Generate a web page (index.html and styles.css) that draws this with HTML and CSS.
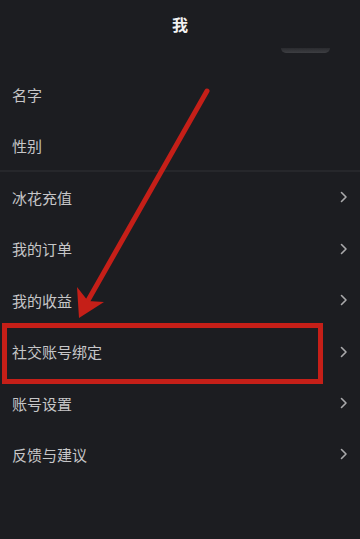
FILE: index.html
```html
<!DOCTYPE html>
<html lang="zh-CN">
<head>
<meta charset="utf-8">
<link rel="stylesheet" href="styles.css">
</head>
<body>
<div class="page">
  <header class="topbar">
    <h1 class="title">我</h1>
    <div class="ghost"></div>
  </header>
  <ul class="list">
    <li class="row"><span class="label">名字</span></li>
    <li class="row row--sep"><span class="label">性别</span></li>
    <li class="row"><span class="label">冰花充值</span><svg class="chev" viewBox="0 0 8 12"><path d="M1.5 1.5 L6 6 L1.5 10.5"/></svg></li>
    <li class="row"><span class="label">我的订单</span><svg class="chev" viewBox="0 0 8 12"><path d="M1.5 1.5 L6 6 L1.5 10.5"/></svg></li>
    <li class="row"><span class="label">我的收益</span><svg class="chev" viewBox="0 0 8 12"><path d="M1.5 1.5 L6 6 L1.5 10.5"/></svg></li>
    <li class="row"><span class="label">社交账号绑定</span><svg class="chev" viewBox="0 0 8 12"><path d="M1.5 1.5 L6 6 L1.5 10.5"/></svg></li>
    <li class="row"><span class="label">账号设置</span><svg class="chev" viewBox="0 0 8 12"><path d="M1.5 1.5 L6 6 L1.5 10.5"/></svg></li>
    <li class="row"><span class="label">反馈与建议</span><svg class="chev" viewBox="0 0 8 12"><path d="M1.5 1.5 L6 6 L1.5 10.5"/></svg></li>
  </ul>
  <svg class="annot" viewBox="0 0 360 539" width="360" height="539">
    <line x1="207" y1="91" x2="86" y2="304" class="arrow-line"/>
    <path class="arrow-head" d="M77 287 L79 318 L104 302 L88 301 Z"/>
    <rect class="hl-box" x="4.5" y="325.5" width="316" height="56"/>
  </svg>
</div>
</body>
</html>
```
FILE: styles.css
```css
* { box-sizing: border-box; }
html, body { margin: 0; padding: 0; }
body {
  background: #1c1d21;
  font-family: "Noto Sans CJK SC", "Noto Sans", sans-serif;
}
.page {
  position: relative;
  width: 360px;
  height: 539px;
  overflow: hidden;
  background: #1c1d21;
}
.topbar {
  position: relative;
  height: 50px;
  display: flex;
  align-items: center;
  justify-content: center;
}
.title {
  margin: 0 0 2px;
  font-size: 16px;
  font-weight: 700;
  color: #f2f2f2;
  line-height: 1;
}
.ghost {
  position: absolute;
  left: 281px;
  top: 48px;
  width: 49px;
  height: 5px;
  border-radius: 0 0 6px 6px;
  background: linear-gradient(#2a2b2f, #3d3e42);
}
.list {
  list-style: none;
  margin: 19px 0 0;
  padding: 0;
}
.row {
  height: 51.4px;
  display: flex;
  align-items: center;
  justify-content: space-between;
  padding: 0 12px;
}
.row--sep {
  border-bottom: 2px solid #26272b;
  padding-top: 1px;
}
.label {
  font-size: 15px;
  color: #c6c6c8;
  line-height: 1;
}
.chev {
  width: 8px;
  height: 12px;
  fill: none;
  stroke: #a9a9ab;
  stroke-width: 1.6;
  stroke-linecap: round;
  stroke-linejoin: round;
}
.annot {
  position: absolute;
  left: 0;
  top: 0;
  pointer-events: none;
}
.arrow-line {
  stroke: #c51f18;
  stroke-width: 5;
  stroke-linecap: round;
}
.arrow-head {
  fill: #c51f18;
}
.hl-box {
  fill: none;
  stroke: #c51f18;
  stroke-width: 5;
}
```
